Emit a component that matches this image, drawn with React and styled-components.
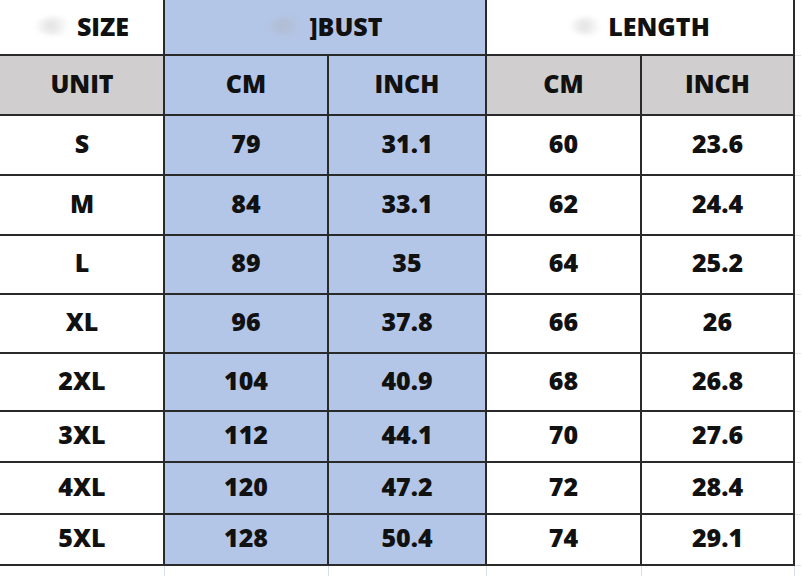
import React from 'react'
import styled, { createGlobalStyle } from 'styled-components'

const GlobalStyle = createGlobalStyle`
  html, body {
    margin: 0;
    padding: 0;
    background: #ffffff;
    overflow: hidden;
  }
  body {
    font-family: 'Open Sans', 'Noto Sans', sans-serif;
  }
`;

const rows = [
  { size: 'S', bustCm: '79', bustIn: '31.1', lenCm: '60', lenIn: '23.6', h: 60 },
  { size: 'M', bustCm: '84', bustIn: '33.1', lenCm: '62', lenIn: '24.4', h: 60 },
  { size: 'L', bustCm: '89', bustIn: '35', lenCm: '64', lenIn: '25.2', h: 59 },
  { size: 'XL', bustCm: '96', bustIn: '37.8', lenCm: '66', lenIn: '26', h: 59 },
  { size: '2XL', bustCm: '104', bustIn: '40.9', lenCm: '68', lenIn: '26.8', h: 58 },
  { size: '3XL', bustCm: '112', bustIn: '44.1', lenCm: '70', lenIn: '27.6', h: 51 },
  { size: '4XL', bustCm: '120', bustIn: '47.2', lenCm: '72', lenIn: '28.4', h: 52 },
  { size: '5XL', bustCm: '128', bustIn: '50.4', lenCm: '74', lenIn: '29.1', h: 51 },
]

const SizeChart = () => {
  return (
    <Sheet>
      <GlobalStyle />
      <Table>
        <colgroup>
          <col style={{ width: 164 }} />
          <col style={{ width: 164 }} />
          <col style={{ width: 158 }} />
          <col style={{ width: 155 }} />
          <col style={{ width: 153 }} />
          <col />
        </colgroup>
        <tbody>
          <Row $h={55}>
            <Cell $first $top>
              <Label><Smudge $w={40} />SIZE</Label>
            </Cell>
            <Cell colSpan={2} $tone="blue" $top>
              <Label><Smudge $w={40} />]BUST</Label>
            </Cell>
            <Cell colSpan={2} $top>
              <Label><Smudge $w={36} />LENGTH</Label>
            </Cell>
            <Ghost $top />
          </Row>
          <Row $h={60}>
            <Cell $first $tone="grey">UNIT</Cell>
            <Cell $tone="blue">CM</Cell>
            <Cell $tone="blue">INCH</Cell>
            <Cell $tone="grey">CM</Cell>
            <Cell $tone="grey">INCH</Cell>
            <Ghost />
          </Row>
          {rows.map(r => (
            <Row key={r.size} $h={r.h}>
              <Cell $first>{r.size}</Cell>
              <Cell $tone="blue">{r.bustCm}</Cell>
              <Cell $tone="blue">{r.bustIn}</Cell>
              <Cell>{r.lenCm}</Cell>
              <Cell>{r.lenIn}</Cell>
              <Ghost />
            </Row>
          ))}
          <Row $h={11}>
            <Spill $first />
            <Spill />
            <Spill />
            <Spill />
            <Spill />
            <Ghost $last />
          </Row>
        </tbody>
      </Table>
    </Sheet>
  );
}

const Sheet = styled.div`
  width: 802px;
  height: 576px;
  overflow: hidden;
  background: #ffffff;
`;

const Table = styled.table`
  border-collapse: collapse;
  table-layout: fixed;
  width: 802px;
  margin-top: -1px;
  margin-left: -1px;
`;

const Row = styled.tr`
  height: ${p => p.$h}px;
`;

const tones = {
  blue: '#b4c6e7',
  grey: '#d0cece',
  white: '#ffffff',
}

const Cell = styled.td`
  padding: 0 0 5px 0;
  border: 2px solid #2a2a2a;
  border-left-color: ${p => (p.$first ? 'transparent' : '#2a2a2a')};
  border-top-color: ${p => (p.$top ? 'transparent' : '#2a2a2a')};
  background: ${p => tones[p.$tone || 'white']};
  color: #111111;
  font-size: 25px;
  font-weight: 800;
  text-align: center;
  vertical-align: middle;
  line-height: 1.2;
`;

const Ghost = styled.td`
  padding: 0;
  border-top: 1px solid ${p => (p.$top ? 'transparent' : '#dfe5ee')};
  border-bottom: 1px solid ${p => (p.$last ? 'transparent' : '#dfe5ee')};
  background: #ffffff;
`;

const Spill = styled.td`
  padding: 0;
  border-left: 1px solid ${p => (p.$first ? 'transparent' : '#d6deea')};
  border-right: 1px solid #d6deea;
  background: #ffffff;
`;

const Label = styled.span`
  display: inline-flex;
  align-items: center;
  gap: 2px;
`;

const Smudge = styled.span`
  display: inline-block;
  width: ${p => p.$w}px;
  height: 18px;
  border-radius: 50%;
  background: radial-gradient(circle at 40% 50%, rgba(170, 170, 170, 0.35), rgba(255, 255, 255, 0) 70%);
  filter: blur(2px);
`;

export default SizeChart
